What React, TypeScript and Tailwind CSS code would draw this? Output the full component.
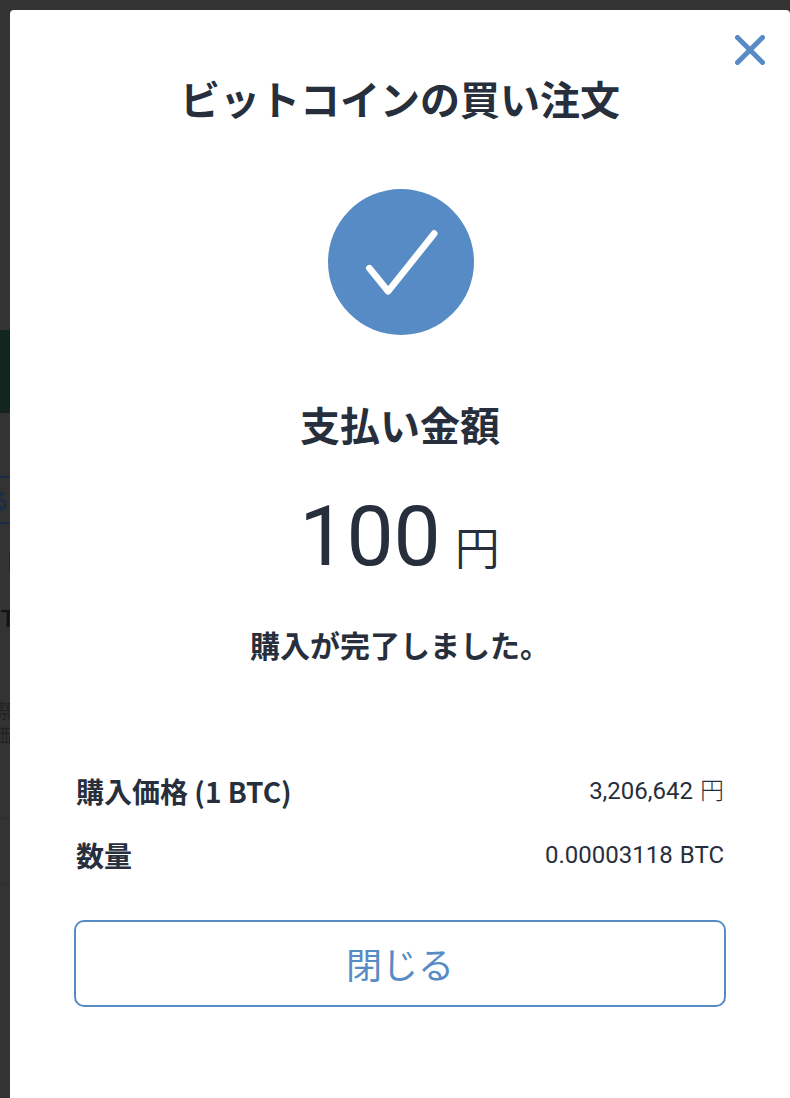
const ACCENT = '#578bc5';

const CloseIcon = () => (
    <svg width="30" height="30" viewBox="0 0 30 30" fill="none" stroke={ACCENT} strokeWidth="5" strokeLinecap="round">
        <path d="M2.5 2.5 27.5 27.5M27.5 2.5 2.5 27.5" />
    </svg>
);

const CheckIcon = () => (
    <svg width="146" height="146" viewBox="0 0 146 146" fill="none">
        <circle cx="73" cy="73" r="73" fill={ACCENT} />
        <path d="M41.3 79.2 60.2 102.3 106.2 44.6" stroke="#fff" strokeWidth="6.6" strokeLinecap="round" strokeLinejoin="round" />
    </svg>
);

const rows = [
    { label: '購入価格 (1 BTC)', value: '3,206,642', unit: '円' },
    { label: '数量', value: '0.00003118', unit: 'BTC' },
];

// Dimmed page that peeks out at the left of the dialog
const PageEdge = () => (
    <div className="flex w-[10px] shrink-0 flex-col overflow-hidden whitespace-nowrap font-['Noto_Sans_CJK_JP',sans-serif]">
        <div className="mt-[320px] h-[83px] shrink-0 bg-[#12261f]" />
        <div className="mt-[63px] flex h-[48px] shrink-0 items-center justify-end border-y-2 border-[#1b2c46] pr-[1px] pb-[2px] text-[22px] leading-[32px] font-bold text-[#1b2c46]">
            る
        </div>
        <div className="mt-[28px] ml-[9px] h-[21px] shrink-0 bg-[#26282b]" />
        <div className="mt-[26px] h-[40px] shrink-0 -indent-[14px] font-['Roboto',sans-serif] text-[24px] leading-[40px] font-medium text-[#111419]">
            BT
        </div>
        <div className="mt-[60px] h-[24px] shrink-0 -indent-[8px] text-[20px] leading-[24px] text-[#202225]">際</div>
        <div className="h-[24px] shrink-0 -indent-[8px] text-[20px] leading-[24px] text-[#202225]">価</div>
        <div className="mt-[71px] h-px shrink-0 bg-[#2d2d2d]" />
        <div className="mt-[65px] h-px shrink-0 bg-[#2d2d2d]" />
    </div>
);

const App = () => {
    return (
        <div className="flex h-[1098px] w-[790px] overflow-hidden bg-[#333333] pt-[10px]">
            <PageEdge />
            <main className="flex w-[780px] shrink-0 flex-col rounded-t-[4px] bg-white px-[64px] font-['Noto_Sans_CJK_JP',sans-serif] text-[#272f3d]">
                <div className="-mr-[39px] flex h-[55px] shrink-0 items-end justify-end">
                    <button aria-label="閉じる">
                        <CloseIcon />
                    </button>
                </div>
                <h1 className="mt-[3px] text-center text-[40px] leading-[60px] font-bold">ビットコインの買い注文</h1>
                <div className="mt-[61px] flex justify-center pl-[2px]">
                    <CheckIcon />
                </div>
                <h2 className="mt-[59px] text-center text-[40px] leading-[60px] font-bold">支払い金額</h2>
                <p className="mt-[33px] flex h-[100px] items-baseline justify-center gap-[14px] pr-[1px]">
                    <span className="font-['Roboto',sans-serif] text-[84px] leading-[100px]">100</span>
                    <span className="text-[45px] leading-[60px] font-[350]">円</span>
                </p>
                <p className="mt-[33px] text-center text-[30px] leading-[48px] font-bold">購入が完了しました。</p>
                <dl className="mt-[91px] flex flex-col px-[2px]">
                    {rows.map((row) => (
                        <div key={row.label} className="flex h-[64px] items-center justify-between">
                            <dt className="text-[28px] font-bold">{row.label}</dt>
                            <dd className="flex items-baseline gap-[7px] font-['Roboto',sans-serif] text-[24px] leading-[36px]">
                                <span>{row.value}</span>
                                {row.unit === '円' ? (
                                    <span className="font-['Noto_Sans_CJK_JP',sans-serif] leading-[32px] font-light">{row.unit}</span>
                                ) : (
                                    <span>{row.unit}</span>
                                )}
                            </dd>
                        </div>
                    ))}
                </dl>
                <button className="mt-[33px] flex h-[87px] shrink-0 items-center justify-center rounded-[10px] border-2 border-[#578bc5] pb-[2px] text-[36px] text-[#578bc5]">
                    閉じる
                </button>
            </main>
        </div>
    );
};

export default App;
